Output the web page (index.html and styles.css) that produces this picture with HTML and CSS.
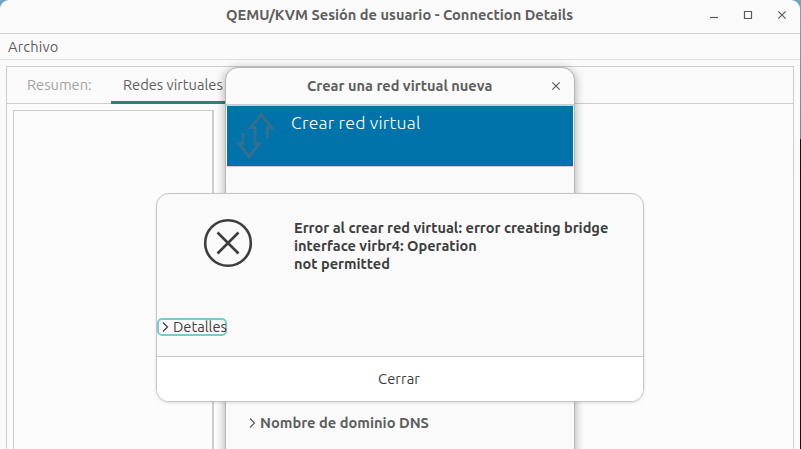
FILE: index.html
```html
<!DOCTYPE html>
<html lang="es">
<head>
<meta charset="utf-8">
<title>QEMU/KVM Sesión de usuario - Connection Details</title>
<link rel="stylesheet" href="styles.css">
</head>
<body>
<div class="desktop">
  <main class="window">
    <header class="titlebar">
      <h1 class="window-title">QEMU/KVM Sesión de usuario - Connection Details</h1>
      <div class="controls">
        <svg width="10" height="10" viewBox="0 0 10 10"><path d="M1 7.5h8"/></svg>
        <svg width="10" height="10" viewBox="0 0 10 10"><path d="M1.5 1.5h7v7h-7z"/></svg>
        <svg width="10" height="10" viewBox="0 0 10 10"><path d="M1.3 1.3l7.4 7.4M8.7 1.3L1.3 8.7"/></svg>
      </div>
    </header>
    <nav class="menubar"><span>Archivo</span></nav>
    <section class="notebook">
      <div class="tabs">
        <div class="tab"><span>Resumen:</span></div>
        <div class="tab active"><span>Redes virtuales</span></div>
      </div>
      <div class="page"><div class="list"></div></div>
    </section>
  </main>

  <section class="wizard">
    <header class="wizard-head">
      <h2 class="wizard-title">Crear una red virtual nueva</h2>
      <svg class="wizard-close" width="10" height="10" viewBox="0 0 10 10"><path d="M1.3 1.3l7.4 7.4M8.7 1.3L1.3 8.7"/></svg>
    </header>
    <div class="banner">
      <svg class="arrows" width="38" height="48" viewBox="0 0 38 48">
        <path d="M31.5 26V15.5H35.5L25 2.5L14.5 15.5H19V31.5H23.5L13 44.5L2.5 31.5H7V21"/>
      </svg>
      <span class="banner-title">Crear red virtual</span>
    </div>
    <div class="wizard-body">
      <div class="dns">
        <svg width="7" height="12" viewBox="0 0 7 12"><path d="M1 1.5L5.5 6L1 10.5"/></svg>
        <span>Nombre de dominio DNS</span>
      </div>
    </div>
  </section>

  <section class="alert">
    <div class="alert-body">
      <div class="message">
        <svg class="error-icon" width="50" height="50" viewBox="0 0 50 50"><circle cx="25" cy="25" r="22.8"/><path d="M14.5 14.5l21 21M35.5 14.5l-21 21"/></svg>
        <p class="error-text"><span>Error al crear red virtual: error creating bridge</span><span>interface virbr4: Operation</span><span>not permitted</span></p>
      </div>
      <div class="details">
        <svg width="7" height="12" viewBox="0 0 7 12"><path d="M1 1.5L5.5 6L1 10.5"/></svg>
        <span>Detalles</span>
      </div>
    </div>
    <div class="alert-action"><span>Cerrar</span></div>
  </section>
</div>
</body>
</html>
```
FILE: styles.css
```css
* { box-sizing: border-box; }
body { margin: 0; overflow: hidden; font-family: Ubuntu, "Noto Sans", sans-serif; font-size: 14.667px; color: #5e5e5e; }
h1, h2, p { margin: 0; }
span, h1, h2 { white-space: nowrap; }
svg { display: block; flex: none; fill: none; stroke: #5c5c5c; stroke-width: 1.2; }
.desktop { position: relative; width: 801px; height: 449px; overflow: hidden; background: linear-gradient(#6fa9c1 0, #4d94b3 139px, #111 139px, #2c001e 180px); }
.window { width: 800px; height: 449px; display: flex; flex-direction: column; background: #fafafa; border-radius: 9px 9px 0 0; }
.titlebar { height: 34px; flex: none; display: flex; align-items: center; justify-content: space-between; padding: 0 13px 4px 226px; border-bottom: 1px solid #cfcfcf; }
.window-title { font-size: 14.6px; line-height: 20px; font-weight: 600; }
.controls { display: flex; gap: 24px; }
.menubar { height: 26px; flex: none; padding: 3px 8px 0; line-height: 20px; letter-spacing: 0.15px; border-bottom: 1px solid #dcdcdc; }
.notebook { flex: 1; margin: 6px 6px 0 6px; display: flex; flex-direction: column; border: 1px solid #cdcdcd; border-bottom: 0; background: #fcfcfc; }
.tabs { height: 37px; flex: none; display: flex; background: #fafafa; border-bottom: 1px solid #cdcdcd; line-height: 20px; }
.tab { width: 104px; height: 37px; padding: 8px 0 0 20px; color: #a3a3a3; }
.tab.active { width: 140px; padding-left: 12px; color: #5e5e5e; border-bottom: 3px solid #2f8277; }
.page { flex: 1; display: flex; padding: 6px 0 0 6px; }
.list { width: 201px; border: 1px solid #cdcdcd; border-right-width: 2px; border-bottom: 0; }

.wizard { position: absolute; left: 225px; top: 67px; width: 350px; height: 400px; border: 1px solid #b5b5b5; border-radius: 13px 13px 0 0; background: #fafafa; box-shadow: 0 2px 9px 1px #00000048; }
.wizard-head { height: 38px; display: flex; justify-content: space-between; padding: 8px 13px 0 81px; border-bottom: 2px solid #cdcdcd; }
.wizard-title { font-size: 14.58px; line-height: 20px; font-weight: 600; }
.wizard-close { margin-top: 5px; }
.banner { height: 61px; display: flex; margin: 0 1px; background: #0073ab; border-bottom: 1px solid #cdcdcd; }
.arrows { margin: 6px 17px 0 9px; stroke: #346f8d; stroke-width: 3; }
.banner-title { color: #fff; font-size: 17.6px; letter-spacing: 0.22px; line-height: 24px; font-weight: 300; margin-top: 5px; }
.wizard-body { margin-right: 12px; height: 400px; padding: 246px 0 0 23px; }
.dns { display: flex; align-items: center; gap: 4px; height: 20px; line-height: 20px; font-weight: 600; }

.alert { position: absolute; left: 156px; top: 193px; width: 488px; height: 209px; display: flex; flex-direction: column; border: 1px solid #c6c6c6; border-radius: 13px; overflow: hidden; background: #fafafa; box-shadow: 0 1px 3px #00000020; color: #3d3d3d; }
.alert svg { stroke: #3d3d3d; }
.alert-body { flex: 1; padding-top: 24px; }
.message { display: flex; gap: 41px; height: 100px; padding-left: 46px; }
.alert .error-icon { stroke-width: 2.6; }
.error-text { padding-top: 1px; font-size: 14.54px; font-weight: 600; line-height: 18px; }
.error-text span { display: block; }
.details { width: 70px; height: 18px; display: flex; align-items: center; gap: 4px; padding-left: 3px; border: 2px solid #78cbc8; border-radius: 5px; line-height: 18px; }
.alert-action { height: 45px; flex: none; border-top: 1px solid #c6c6c6; background: #fff; display: flex; justify-content: center; padding: 12px 2px 0 0; line-height: 20px; letter-spacing: 0.1px; }
```
